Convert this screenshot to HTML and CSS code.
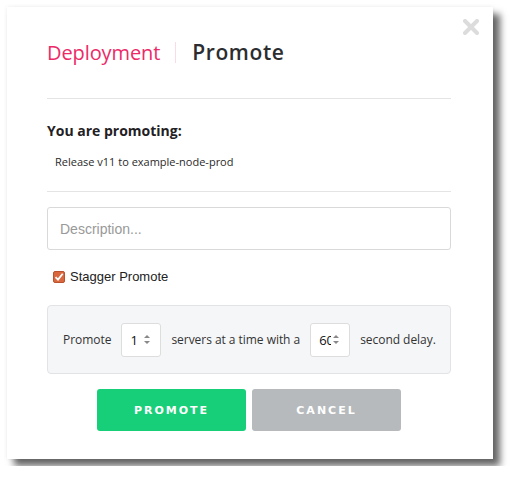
FILE: index.html
```html
<!DOCTYPE html>
<html>
<head>
<meta charset="utf-8">
<link rel="stylesheet" href="styles.css">
</head>
<body>
<div class="modal">
  <button class="close" aria-label="Close">
    <svg width="16" height="16" viewBox="0 0 16 16"><path d="M2 2L14 14M14 2L2 14" stroke="#dcdcdc" stroke-width="4" stroke-linecap="round"/></svg>
  </button>
  <div class="title">
    <span class="crumb">Deployment</span>
    <span class="sep"></span>
    <span class="page">Promote</span>
  </div>
  <hr class="rule rule-top">
  <h3 class="lead">You are promoting:</h3>
  <p class="release">Release v11 to example-node-prod</p>
  <hr class="rule rule-mid">
  <div class="desc">Description...</div>
  <label class="stagger">
    <span class="check">
      <svg width="10" height="10" viewBox="0 0 10 10"><path d="M1.5 5.2L4 7.6L8.7 1.8" fill="none" stroke="#fff" stroke-width="1.8"/></svg>
    </span>
    <span>Stagger Promote</span>
  </label>
  <div class="panel">
    <span>Promote</span>
    <span class="num"><span class="val">1</span><span class="spin"><i class="up"></i><i class="down"></i></span></span>
    <span>servers at a time with a</span>
    <span class="num"><span class="val">60</span><span class="spin"><i class="up"></i><i class="down"></i></span></span>
    <span>second delay.</span>
  </div>
  <div class="actions">
    <button class="btn btn-go">PROMOTE</button>
    <button class="btn btn-cancel">CANCEL</button>
  </div>
</div>
</body>
</html>
```
FILE: styles.css
```css
html, body { margin: 0; padding: 0; background: #fff; }
body { padding: 7px; font-family: "Liberation Sans", Arial, sans-serif; }

.modal {
  position: relative;
  width: 486px;
  height: 452px;
  box-sizing: border-box;
  background: #fff;
  padding: 31px 42px 0 40px;
  box-shadow: 7px 7px 7px rgba(0,0,0,0.6), 0 0 4px rgba(0,0,0,0.08);
}
.close {
  position: absolute;
  top: 12px;
  right: 14px;
  border: 0;
  background: none;
  padding: 0;
  width: 16px;
  height: 16px;
}
.close svg { display: block; }

.title {
  display: flex;
  align-items: center;
  height: 28px;
  font-family: "Open Sans", sans-serif;
  font-size: 20px;
}
.crumb { color: #ec2a68; letter-spacing: -0.1px; }
.sep { width: 1px; height: 21px; background: #fbdbe6; margin: 0 16px 0 15px; }
.page { color: #2b2d30; font-weight: 600; font-size: 21px; letter-spacing: 0.6px; }

.rule { border: 0; border-top: 1px solid #e4e4e4; margin: 0; }
.rule-top { margin-top: 32px; }
.lead {
  margin: 22px 0 0;
  font-family: "Open Sans", sans-serif;
  font-size: 14px;
  font-weight: 700;
  color: #1f2124;
  line-height: 20px;
}
.release {
  margin: 13px 0 0 8px;
  font-family: "Open Sans", sans-serif;
  font-size: 11px;
  color: #2a2a2a;
  line-height: 16px;
}
.rule-mid { margin-top: 21px; }

.desc {
  margin-top: 15px;
  height: 43px;
  box-sizing: border-box;
  border: 1px solid #d9d9d9;
  border-radius: 3px;
  padding: 0 12px;
  display: flex;
  align-items: center;
  font-size: 14px;
  color: #999;
}
.stagger {
  display: flex;
  align-items: center;
  gap: 5px;
  margin: 19px 0 0 6px;
  font-size: 13px;
  color: #222;
}
.check {
  width: 12px;
  height: 12px;
  border-radius: 2px;
  background: #d9683f;
  border: 1px solid #b9522e;
  box-sizing: border-box;
  display: flex;
  align-items: center;
  justify-content: center;
}
.check svg { display: block; }

.panel {
  margin-top: 21px;
  height: 69px;
  box-sizing: border-box;
  background: #f5f6f8;
  border: 1px solid #e2e3e5;
  border-radius: 4px;
  display: flex;
  align-items: center;
  padding: 0 15px;
  font-family: "Open Sans", sans-serif;
  font-size: 12px;
  letter-spacing: -0.04px;
  color: #333;
}
.panel > span:not(.num) { white-space: nowrap; }
.num {
  flex: 0 0 40px;
  width: 40px;
  height: 34px;
  box-sizing: border-box;
  background: #fff;
  border: 1px solid #ddd;
  border-radius: 3px;
  display: flex;
  align-items: center;
  padding: 0 0 0 8px;
  margin: 0 10px;
  font-size: 13px;
  letter-spacing: 0;
  color: #111;
}
.val { width: 12px; overflow: hidden; white-space: nowrap; }
.spin { display: flex; flex-direction: column; gap: 3px; margin-left: 2px; }
.spin i { display: block; width: 0; height: 0; border-left: 3px solid transparent; border-right: 3px solid transparent; }
.spin .up { border-bottom: 3px solid #888; }
.spin .down { border-top: 3px solid #888; }

.actions {
  display: flex;
  justify-content: center;
  gap: 6px;
  margin-top: 15px;
}
.btn {
  width: 149px;
  height: 42px;
  border: 0;
  border-radius: 3px;
  color: #fff;
  font-family: "DejaVu Sans", sans-serif;
  font-weight: 700;
  font-size: 11px;
  letter-spacing: 2px;
}
.btn-go { background: #18cf79; }
.btn-cancel { background: #b6babd; }
```
